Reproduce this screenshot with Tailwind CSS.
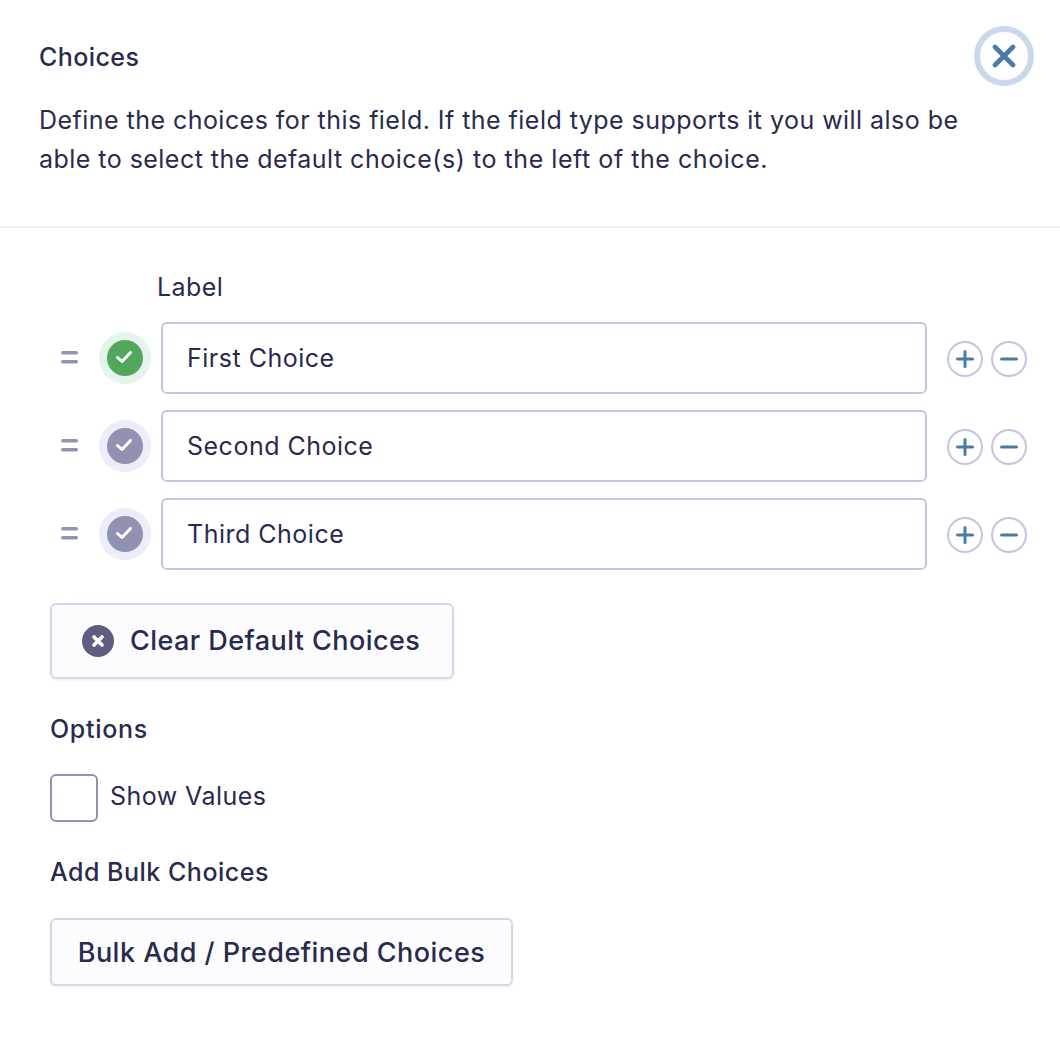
<!DOCTYPE html>
<html>
  <head>
    <meta charset="UTF-8" />
    <script src="https://cdn.jsdelivr.net/npm/@tailwindcss/browser@4"></script>
  </head>
  <body class="bg-white font-['Inter',sans-serif] text-[#282b4d]">
    <div class="relative h-[1060px] w-[1060px] overflow-hidden">
      <!-- Header -->
      <div class="h-[228px] border-b-2 border-[#ecedf8] pl-[39px] pt-[41px]">
        <h2 class="text-[25px] leading-[32px] font-medium tracking-[0.42px]">Choices</h2>
        <p class="mt-[28px] w-[960px] text-[25px] leading-[39px] tracking-[0.46px]">
          Define the choices for this field. If the field type supports it you will also be <br>able to select the default <span class="tracking-[0.55px]">choice(s) to the left of the choice.</span>
        </p>
      </div>

      <!-- Close button -->
      <button class="absolute left-[978px] top-[30px] flex h-[52px] w-[52px] items-center justify-center rounded-full border-[2px] border-[#d5d7e9] bg-white shadow-[0_0_0_4px_#c6d9ec]">
        <svg width="24" height="24" viewBox="0 0 24 24" fill="none" stroke="#4a7aa3" stroke-width="4.6" stroke-linecap="round">
          <path d="M3 3l18 18M21 3L3 21" />
        </svg>
      </button>

      <div class="pl-[50px]">
        <div class="pl-[107px] pt-[43px] text-[25px] leading-[32px] tracking-[0.45px]">Label</div>

        <!-- Choice rows -->
        <div class="mt-[19px] flex flex-col gap-[16px]">
          <div class="flex h-[72px] items-center">
            <svg class="ml-[11px] mr-[20px]" width="18" height="14" viewBox="0 0 18 14" fill="#9092b2">
              <rect y="0" width="17" height="3.6" rx="1.8" /><rect y="9" width="17" height="3.6" rx="1.8" />
            </svg>
            <div class="flex h-[52px] w-[52px] items-center justify-center rounded-full bg-[#e4f3ec]">
              <span class="flex h-[36px] w-[36px] items-center justify-center rounded-full bg-[#52a75d]">
                <svg class="-translate-x-px -translate-y-px" width="18" height="14" viewBox="0 0 18 14" fill="none" stroke="#fff" stroke-width="3" stroke-linecap="round" stroke-linejoin="round"><path d="M2.5 7.5l4.5 4 8.5-9" /></svg>
              </span>
            </div>
            <div class="ml-[10px] flex h-[72px] w-[766px] items-center rounded-[6px] border-2 border-[#c3c6de] pl-[24px] pt-[2px] text-[25px] tracking-[0.5px]">First Choice</div>
            <div class="ml-[20px] flex gap-[8px] pt-[2px]">
              <button class="flex h-[36px] w-[36px] items-center justify-center rounded-full border-2 border-[#c3c6de] bg-white">
                <svg width="18" height="18" viewBox="0 0 18 18" stroke="#4a7aa3" stroke-width="3" stroke-linecap="round"><path d="M1.5 9h15M9 1.5v15" /></svg>
              </button>
              <button class="flex h-[36px] w-[36px] items-center justify-center rounded-full border-2 border-[#c3c6de] bg-white">
                <svg width="18" height="18" viewBox="0 0 18 18" stroke="#4a7aa3" stroke-width="3" stroke-linecap="round"><path d="M1.5 9h15" /></svg>
              </button>
            </div>
          </div>

          <div class="flex h-[72px] items-center">
            <svg class="ml-[11px] mr-[20px]" width="18" height="14" viewBox="0 0 18 14" fill="#9092b2">
              <rect y="0" width="17" height="3.6" rx="1.8" /><rect y="9" width="17" height="3.6" rx="1.8" />
            </svg>
            <div class="flex h-[52px] w-[52px] items-center justify-center rounded-full bg-[#ecedf8]">
              <span class="flex h-[36px] w-[36px] items-center justify-center rounded-full bg-[#9092b2]">
                <svg class="-translate-x-px -translate-y-px" width="18" height="14" viewBox="0 0 18 14" fill="none" stroke="#fff" stroke-width="3" stroke-linecap="round" stroke-linejoin="round"><path d="M2.5 7.5l4.5 4 8.5-9" /></svg>
              </span>
            </div>
            <div class="ml-[10px] flex h-[72px] w-[766px] items-center rounded-[6px] border-2 border-[#c3c6de] pl-[24px] pt-[2px] text-[25px] tracking-[0.5px]">Second Choice</div>
            <div class="ml-[20px] flex gap-[8px] pt-[2px]">
              <button class="flex h-[36px] w-[36px] items-center justify-center rounded-full border-2 border-[#c3c6de] bg-white">
                <svg width="18" height="18" viewBox="0 0 18 18" stroke="#4a7aa3" stroke-width="3" stroke-linecap="round"><path d="M1.5 9h15M9 1.5v15" /></svg>
              </button>
              <button class="flex h-[36px] w-[36px] items-center justify-center rounded-full border-2 border-[#c3c6de] bg-white">
                <svg width="18" height="18" viewBox="0 0 18 18" stroke="#4a7aa3" stroke-width="3" stroke-linecap="round"><path d="M1.5 9h15" /></svg>
              </button>
            </div>
          </div>

          <div class="flex h-[72px] items-center">
            <svg class="ml-[11px] mr-[20px]" width="18" height="14" viewBox="0 0 18 14" fill="#9092b2">
              <rect y="0" width="17" height="3.6" rx="1.8" /><rect y="9" width="17" height="3.6" rx="1.8" />
            </svg>
            <div class="flex h-[52px] w-[52px] items-center justify-center rounded-full bg-[#ecedf8]">
              <span class="flex h-[36px] w-[36px] items-center justify-center rounded-full bg-[#9092b2]">
                <svg class="-translate-x-px -translate-y-px" width="18" height="14" viewBox="0 0 18 14" fill="none" stroke="#fff" stroke-width="3" stroke-linecap="round" stroke-linejoin="round"><path d="M2.5 7.5l4.5 4 8.5-9" /></svg>
              </span>
            </div>
            <div class="ml-[10px] flex h-[72px] w-[766px] items-center rounded-[6px] border-2 border-[#c3c6de] pl-[24px] pt-[2px] text-[25px] tracking-[0.5px]">Third Choice</div>
            <div class="ml-[20px] flex gap-[8px] pt-[2px]">
              <button class="flex h-[36px] w-[36px] items-center justify-center rounded-full border-2 border-[#c3c6de] bg-white">
                <svg width="18" height="18" viewBox="0 0 18 18" stroke="#4a7aa3" stroke-width="3" stroke-linecap="round"><path d="M1.5 9h15M9 1.5v15" /></svg>
              </button>
              <button class="flex h-[36px] w-[36px] items-center justify-center rounded-full border-2 border-[#c3c6de] bg-white">
                <svg width="18" height="18" viewBox="0 0 18 18" stroke="#4a7aa3" stroke-width="3" stroke-linecap="round"><path d="M1.5 9h15" /></svg>
              </button>
            </div>
          </div>
        </div>

        <!-- Clear defaults -->
        <button class="mt-[33px] flex h-[76px] w-[404px] items-center rounded-[6px] border-2 border-[#d5d7e9] bg-[#fcfcfe] pl-[30px] text-[27px] font-medium tracking-[0.43px] shadow-[0_2px_2px_rgba(36,39,72,0.05)]">
          <span class="flex h-[32px] w-[32px] items-center justify-center rounded-full bg-[#5b5e80]">
            <svg width="14" height="14" viewBox="0 0 14 14" stroke="#fff" stroke-width="3.6" stroke-linecap="round"><path d="M3 3l8 8M11 3l-8 8" /></svg>
          </span>
          <span class="ml-[16px]">Clear Default Choices</span>
        </button>

        <div class="mt-[34px] text-[25px] leading-[32px] font-medium tracking-[0.7px]">Options</div>
        <label class="mt-[29px] flex items-center">
          <span class="h-[48px] w-[48px] rounded-[6px] border-2 border-[#9092b2] bg-white"></span>
          <span class="mb-[4px] ml-[12px] text-[25px] leading-[32px] tracking-[0.45px]">Show Values</span>
        </label>

        <div class="mt-[34px] text-[25px] leading-[32px] font-medium tracking-[0.5px]">Add Bulk Choices</div>
        <button class="mt-[30px] flex h-[68px] w-[463px] items-center justify-center rounded-[6px] border-2 border-[#d5d7e9] bg-[#fcfcfe] pt-[2px] text-[27px] font-medium tracking-[0.48px] shadow-[0_2px_2px_rgba(36,39,72,0.05)]">Bulk Add / Predefined Choices</button>
      </div>
    </div>
  </body>
</html>
